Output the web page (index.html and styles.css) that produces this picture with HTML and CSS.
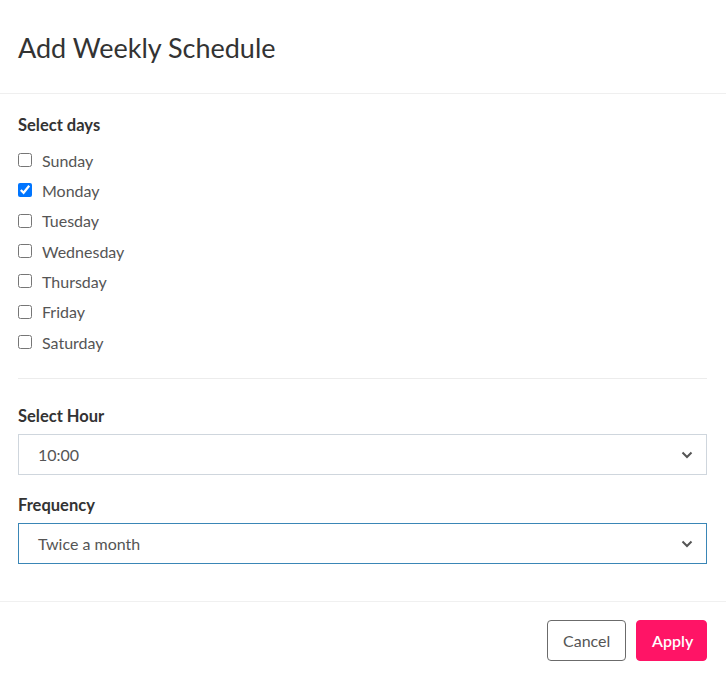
FILE: index.html
```html
<!DOCTYPE html>
<html>
<head>
<meta charset="utf-8">
<link rel="stylesheet" href="styles.css">
</head>
<body>
<div class="modal">
  <div class="modal-header">
    <h1 class="title">Add Weekly Schedule</h1>
  </div>
  <div class="modal-body">
    <div class="group-label">Select days</div>
    <div class="days">
      <label class="day"><input type="checkbox"><span>Sunday</span></label>
      <label class="day"><input type="checkbox" checked><span>Monday</span></label>
      <label class="day"><input type="checkbox"><span>Tuesday</span></label>
      <label class="day"><input type="checkbox"><span>Wednesday</span></label>
      <label class="day"><input type="checkbox"><span>Thursday</span></label>
      <label class="day"><input type="checkbox"><span>Friday</span></label>
      <label class="day"><input type="checkbox"><span>Saturday</span></label>
    </div>
    <hr class="divider">
    <div class="field hour">
      <div class="group-label">Select Hour</div>
      <div class="select"><span>10:00</span><svg class="chev" width="12" height="8" viewBox="0 0 12 8"><path d="M1.5 1.5 L6 6 L10.5 1.5" fill="none" stroke="#555" stroke-width="2"/></svg></div>
    </div>
    <div class="field freq">
      <div class="group-label">Frequency</div>
      <div class="select focused"><span>Twice a month</span><svg class="chev" width="12" height="8" viewBox="0 0 12 8"><path d="M1.5 1.5 L6 6 L10.5 1.5" fill="none" stroke="#555" stroke-width="2"/></svg></div>
    </div>
  </div>
  <div class="modal-footer">
    <button class="btn btn-cancel">Cancel</button>
    <button class="btn btn-apply">Apply</button>
  </div>
</div>
</body>
</html>
```
FILE: styles.css
```css
html, body {
  margin: 0;
  padding: 0;
  background: #fff;
}
body {
  font-family: Lato, "Open Sans", sans-serif;
  color: #333;
}
.modal {
  width: 726px;
  height: 679px;
  display: flex;
  flex-direction: column;
}
.modal-header {
  height: 93px;
  border-bottom: 1px solid #efefef;
  display: flex;
  align-items: center;
  padding: 0 19px 0 18px;
}
.title {
  margin: 0;
  font-size: 27px;
  font-weight: 400;
  color: #333;
  line-height: 34px;
  position: relative;
  top: 1px;
}
.modal-body {
  padding: 20px 19px 0 18px;
  border-bottom: 1px solid #f0f0f0;
  height: 508px;
  box-sizing: border-box;
}
.group-label {
  font-size: 16.5px;
  font-weight: 700;
  line-height: 22px;
  color: #333;
}
.days {
  margin-top: 9px;
  display: flex;
  flex-direction: column;
}
.day {
  height: 30.33px;
  display: flex;
  align-items: center;
  font-size: 16px;
  color: #555;
}
.day input {
  margin: 0 10px 0 0;
  width: 14px;
  height: 14px;
}
.divider {
  border: 0;
  border-top: 1px solid #ececec;
  margin: 21px 0 0 0;
}
.field.hour {
  margin-top: 26px;
}
.field.freq {
  margin-top: 19px;
}
.select {
  margin-top: 7px;
  height: 41px;
  box-sizing: border-box;
  border: 1px solid #cfd6dd;
  display: flex;
  align-items: center;
  justify-content: space-between;
  padding: 0 13px 0 19px;
  font-size: 16px;
  color: #555;
}
.select.focused {
  border-color: #3a86b6;
}
.chev {
  display: block;
}
.modal-footer {
  flex: 1;
  display: flex;
  justify-content: flex-end;
  align-items: flex-start;
  gap: 10px;
  padding: 18px 19px 0 18px;
}
.btn {
  height: 41px;
  border-radius: 4px;
  font-family: Lato, "Open Sans", sans-serif;
  font-size: 16px;
  padding: 0 15px;
  cursor: pointer;
}
.btn-cancel {
  background: #fff;
  border: 1px solid #6b6b6b;
  color: #555;
  width: 79px;
}
.btn-apply {
  background: #ff1466;
  border: 1px solid #ff1466;
  color: #fff;
  font-weight: 600;
  width: 71px;
}
```
